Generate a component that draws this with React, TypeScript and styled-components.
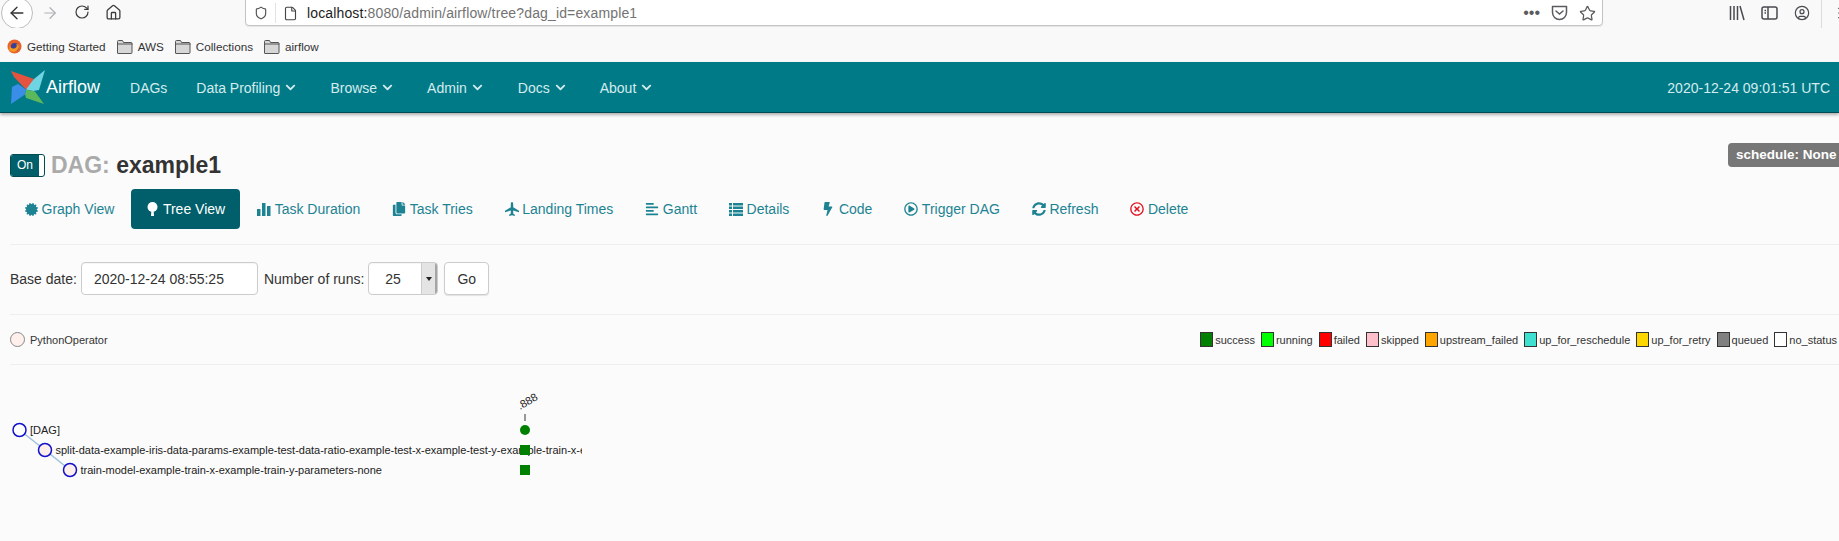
import React from 'react';
import styled, { createGlobalStyle } from 'styled-components';
import { ArrowLeft, ArrowRight, RotateCw, House, Shield, File, Star, CircleUser, Menu } from 'lucide-react';
import {
  FaCertificate,
  FaCopy,
  FaAlignLeft,
  FaBolt,
  FaRegPlayCircle,
  FaSyncAlt,
  FaRegTimesCircle,
  FaChevronDown,
} from 'react-icons/fa';

const GlobalStyle = createGlobalStyle`
  html, body {
    margin: 0;
    height: 541px;
    overflow: hidden;
    background: #fbfbfb;
    font-family: 'Liberation Sans', Arial, sans-serif;
  }
`;

/* ── browser chrome ── */

const Chrome = styled.div`
  background: #f9f9fa;
  color: #4a4a4f;
`;

const Toolbar = styled.div`
  display: flex;
  align-items: flex-start;
  height: 28px;
  overflow: hidden;
`;

const BackButton = styled.div`
  flex: none;
  width: 30px;
  height: 30px;
  margin: -3px 0 0 1px;
  border: 1px solid #bdbdbd;
  border-radius: 50%;
  background: #fff;
  display: flex;
  align-items: center;
  justify-content: center;
`;

const NavIcon = styled.span<{ $left: number; $muted?: boolean }>`
  flex: none;
  display: flex;
  margin: 4px 0 0 ${(p) => p.$left}px;
  color: ${(p) => (p.$muted ? '#b1b1b3' : '#3c3c3f')};
`;

const UrlBar = styled.div`
  flex: none;
  width: 1358px;
  height: 34px;
  margin: -8px 0 0 123px;
  box-sizing: border-box;
  padding: 8px 0 0 8px;
  display: flex;
  align-items: center;
  background: #fff;
  border: 1px solid #c4c4c4;
  border-radius: 4px;
  box-shadow: 0 1px 1px rgba(0, 0, 0, 0.08);
`;

const UrlDivider = styled.span`
  width: 1px;
  height: 20px;
  margin: 0 7px;
  background: #e2e2e2;
`;

const UrlText = styled.span`
  flex: 1;
  margin-left: 9px;
  font-size: 14px;
  color: #737373;
  letter-spacing: 0.01em;
  strong {
    font-weight: 400;
    color: #1c1c1c;
  }
`;

const UrlActions = styled.span`
  display: flex;
  align-items: center;
  gap: 11px;
  margin-right: 6px;
  color: #5b5b5f;
`;

const RightIcons = styled.div`
  display: flex;
  align-items: flex-start;
  margin-left: 126px;
  color: #4a4a4f;
`;

const RightIcon = styled.span<{ $gap: number }>`
  display: flex;
  margin: 5px ${(p) => p.$gap}px 0 0;
`;

const ToolbarDivider = styled.span`
  width: 1px;
  height: 28px;
  margin-right: 14px;
  background: #dcdcdc;
`;

const Bookmarks = styled.div`
  display: flex;
  align-items: center;
  height: 34px;
  padding: 3px 0 0 7px;
  box-sizing: border-box;
  font-size: 11.7px;
  color: #333;
`;

const Bookmark = styled.span`
  display: flex;
  align-items: center;
  gap: 5px;
  margin-right: 11px;
`;

/* ── airflow navbar ── */

const Navbar = styled.nav`
  display: flex;
  align-items: center;
  height: 51px;
  box-sizing: border-box;
  padding: 1px 9px 0 10px;
  background: #017a87;
  border-bottom: 1px solid #024b53;
  box-shadow: 0 2px 3px rgba(0, 0, 0, 0.3);
  color: #d5ecee;
  font-size: 14px;
`;

const Brand = styled.span`
  display: flex;
  align-items: center;
  gap: 1px;
  margin-right: 30px;
  font-size: 18px;
  color: #fff;
`;

const NavItem = styled.span<{ $gap: number }>`
  display: flex;
  align-items: center;
  gap: 5px;
  margin-right: ${(p) => p.$gap}px;
`;

const Clock = styled.span`
  margin-left: auto;
  font-size: 14px;
`;

/* ── page ── */

const Page = styled.main`
  padding: 30px 0 0 10px;
`;

const TitleRow = styled.div`
  display: flex;
  justify-content: space-between;
  align-items: flex-start;
  height: 46px;
`;

const Title = styled.h4`
  display: flex;
  align-items: center;
  gap: 6px;
  margin: 7px 0 0;
  font-size: 23px;
  line-height: 30px;
  font-weight: 700;
  color: #333;
  span {
    color: #aaa;
  }
`;

const Toggle = styled.span`
  display: flex;
  width: 35px;
  height: 23px;
  box-sizing: border-box;
  border: 1px solid #024b53;
  border-radius: 3px;
  background: #fff;
  overflow: hidden;
  font-size: 12px;
  font-weight: 400;
`;

const ToggleOn = styled.span`
  && {
    color: #fff;
  }
  width: 28px;
  background: #005f6b;
  text-align: center;
  line-height: 21px;
`;

const ScheduleBadge = styled.span`
  box-sizing: border-box;
  width: 111px;
  height: 24px;
  padding-left: 8px;
  line-height: 24px;
  border-radius: 4px 0 0 4px;
  background: #777;
  color: #fff;
  font-size: 13.5px;
  font-weight: 700;
  white-space: nowrap;
`;

const Tabs = styled.ul`
  display: flex;
  gap: 2px;
  margin: 0;
  padding: 0 0 15px;
  list-style: none;
  border-bottom: 1px solid #eee;
`;

const Tab = styled.li<{ $active?: boolean }>`
  display: flex;
  align-items: center;
  gap: 3.5px;
  height: 40px;
  padding: 0 15px;
  border-radius: 4px;
  font-size: 14px;
  color: ${(p) => (p.$active ? '#fff' : '#1d8393')};
  background: ${(p) => (p.$active ? '#005f6b' : 'transparent')};
`;

const TabIcon = styled.span<{ $danger?: boolean; $wide?: boolean }>`
  display: flex;
  justify-content: center;
  min-width: ${(p) => (p.$wide ? '11px' : '0')};
  color: ${(p) => (p.$danger ? '#e0101c' : 'inherit')};
`;

const FormRow = styled.form`
  display: flex;
  align-items: center;
  height: 70px;
  padding-bottom: 2px;
  box-sizing: border-box;
  border-bottom: 1px solid #eee;
  font-size: 14px;
  color: #333;
`;

const Field = styled.span`
  display: flex;
  align-items: center;
  height: 33px;
  box-sizing: border-box;
  background: #fff;
  border: 1px solid #ccc;
  border-radius: 4px;
  box-shadow: inset 0 1px 1px rgba(0, 0, 0, 0.04);
`;

const DateField = styled(Field)`
  width: 177px;
  margin: 0 6px 0 4px;
  padding-left: 12px;
`;

const RunsField = styled(Field)`
  width: 70px;
  margin: 0 6px 0 4px;
  padding-left: 16px;
  justify-content: space-between;
  overflow: hidden;
`;

const SelectArrow = styled.span`
  width: 13px;
  height: 100%;
  display: flex;
  align-items: center;
  justify-content: center;
  background: #e4e4e4;
  border-left: 1px solid #ccc;
  border-right: 2px solid #a5a5a5;
  &::after {
    content: '';
    border: 3px solid transparent;
    border-top: 4px solid #222;
    border-bottom: 0;
  }
`;

const GoButton = styled(Field)`
  width: 45px;
  justify-content: center;
  box-shadow: 0 1px 1px rgba(0, 0, 0, 0.1);
`;

const LegendRow = styled.div`
  display: flex;
  justify-content: space-between;
  align-items: center;
  height: 50px;
  padding: 0 2px 0 0;
  box-sizing: border-box;
  border-bottom: 1px solid #eee;
  font-size: 11px;
  color: #333;
`;

const OperatorKey = styled.span`
  display: flex;
  align-items: center;
  gap: 5px;
  &::before {
    content: '';
    width: 13px;
    height: 13px;
    border: 1px solid #888;
    border-radius: 50%;
    background: #fff0eb;
  }
`;

const Legend = styled.div`
  display: flex;
  gap: 6px;
`;

const LegendItem = styled.span`
  display: flex;
  align-items: center;
  gap: 2px;
`;

const Swatch = styled.span<{ $color: string }>`
  width: 11px;
  height: 13px;
  border: 1px solid #333;
  background: ${(p) => p.$color};
`;

const TreeWrap = styled.div`
  margin: 24px 0 0 -10px;
`;

const TreeSvg = styled.svg`
  display: block;
`;

/* ── drawings ── */

const TreeIcon = () => (
  <svg width="13" height="14" viewBox="0 0 13 14" fill="currentColor">
    <ellipse cx="6.500" cy="5" rx="5" ry="5" />
    <path d="M5.400 8h2.200l.4 6H5z" />
  </svg>
);

const StatsIcon = () => (
  <svg width="14" height="14" viewBox="0 0 14 14" fill="currentColor">
    <rect x="0" y="7" width="3.500" height="7" />
    <rect x="5" y="1" width="3.500" height="13" />
    <rect x="10" y="4" width="3.500" height="10" />
  </svg>
);

const PlaneIcon = () => (
  <svg width="14" height="14" viewBox="0 0 14 14" fill="currentColor">
    <path d="M7 0c.9 0 1.200 1.200 1.200 2.500v2.700L14 8.800v1.400L8.200 8.600v3l1.600 1.200V14L7 13.200 4.200 14v-1.200l1.600-1.200v-3L0 10.200V8.800l5.800-3.600V2.500C5.800 1.200 6.100 0 7 0z" />
  </svg>
);

const ListIcon = () => (
  <svg width="14" height="13" viewBox="0 0 14 13" fill="currentColor">
    <rect x="0" y="0" width="3" height="2.500" />
    <rect x="0" y="3.500" width="3" height="2.500" />
    <rect x="0" y="7" width="3" height="2.500" />
    <rect x="0" y="10.500" width="3" height="2.500" />
    <rect x="4" y="0" width="10" height="2.500" />
    <rect x="4" y="3.500" width="10" height="2.500" />
    <rect x="4" y="7" width="10" height="2.500" />
    <rect x="4" y="10.500" width="10" height="2.500" />
  </svg>
);

const Pinwheel = () => (
  <svg width="35" height="35" viewBox="0 0 35 35">
    <path d="M1 1l23 8-3 5-5 5.500L4 7z" fill="#e4533f" />
    <path d="M24 9l-3 5-5 5.500z" fill="#f08a72" />
    <path d="M35 0L29 20l-6 1-7-1.500L24 9z" fill="#6fd5e3" />
    <path d="M34 34L16 28l-1-4 1-4.500 9 2z" fill="#5cb85c" />
    <path d="M1 34L2 17l6-3 8 5.500-1 5z" fill="#3b8ee8" />
  </svg>
);

const Folder = () => (
  <svg width="16" height="14" viewBox="0 0 16 14" fill="#d7d7d7" stroke="#555">
    <path d="M.5 3V1.500a1 1 0 0 1 1-1h4l1 2h8a1 1 0 0 1 .5 1v9a1 1 0 0 1-1 1h-13a.5.5 0 0 1-.5-.5z" />
    <path d="M.5 4h15" fill="none" />
  </svg>
);

const FirefoxLogo = () => (
  <svg width="15" height="15" viewBox="0 0 15 15">
    <circle cx="7.500" cy="7.500" r="7" fill="#e8622a" />
    <circle cx="7.800" cy="8" r="4" fill="#3b3f96" />
    <path d="M2 11C5 14 11 13 12 8c0-2-1-3-3-3 2 2 0 5-3 4.500S3 7 3 5z" fill="#f59a1f" />
  </svg>
);

const Pocket = () => (
  <svg width="17" height="16" viewBox="0 0 17 16" fill="none" stroke="currentColor" strokeWidth="1.500">
    <path d="M1.500 1.500h14v6a7 7 0 0 1-14 0z" strokeLinejoin="round" />
    <path d="M5 6l3.500 3L12 6" strokeLinecap="round" />
  </svg>
);

const LibraryIcon = () => (
  <svg width="16" height="16" viewBox="0 0 16 16" fill="none" stroke="currentColor" strokeWidth="1.500">
    <path d="M1.500 1v14M5 1v14M8.500 1v14M11 1l4 14" />
  </svg>
);

const SidebarIcon = () => (
  <svg width="17" height="16" viewBox="0 0 17 16" fill="none" stroke="currentColor" strokeWidth="1.500">
    <rect x="1" y="2" width="15" height="12" rx="2" />
    <path d="M7 2v12M3.500 5.500H5M3.500 8H5" />
  </svg>
);

const tabs = [
  { label: 'Graph View', icon: <FaCertificate size={13} /> },
  { label: 'Tree View', icon: <TreeIcon />, active: true },
  { label: 'Task Duration', icon: <StatsIcon /> },
  { label: 'Task Tries', icon: <FaCopy size={14} /> },
  { label: 'Landing Times', icon: <PlaneIcon /> },
  { label: 'Gantt', icon: <FaAlignLeft size={14} /> },
  { label: 'Details', icon: <ListIcon /> },
  { label: 'Code', icon: <FaBolt size={14} />, wide: true },
  { label: 'Trigger DAG', icon: <FaRegPlayCircle size={14} /> },
  { label: 'Refresh', icon: <FaSyncAlt size={14} /> },
  { label: 'Delete', icon: <FaRegTimesCircle size={14} />, danger: true },
];

const states = [
  ['success', 'green'],
  ['running', 'lime'],
  ['failed', 'red'],
  ['skipped', 'pink'],
  ['upstream_failed', 'orange'],
  ['up_for_reschedule', 'turquoise'],
  ['up_for_retry', 'gold'],
  ['queued', 'gray'],
  ['no_status', 'white'],
];

const menus = [
  { label: 'Data Profiling', gap: 34 },
  { label: 'Browse', gap: 34 },
  { label: 'Admin', gap: 35 },
  { label: 'Docs', gap: 34 },
  { label: 'About', gap: 0 },
];

const nodes = [
  { x: 19.5, y: 431, fill: '#fff', label: '[DAG]' },
  { x: 45, y: 451, fill: '#ffefeb', label: 'split-data-example-iris-data-params-example-test-data-ratio-example-test-x-example-test-y-example-train-x-example-train-y' },
  { x: 70, y: 471, fill: '#ffefeb', label: 'train-model-example-train-x-example-train-y-parameters-none' },
];

export default function App() {
  return (
    <>
      <GlobalStyle />
      <Chrome>
        <Toolbar>
          <BackButton>
            <ArrowLeft size={20} strokeWidth={1.6} color="#333" />
          </BackButton>
          <NavIcon $left={8} $muted>
            <ArrowRight size={18} strokeWidth={1.6} />
          </NavIcon>
          <NavIcon $left={15}>
            <RotateCw size={16} strokeWidth={1.8} />
          </NavIcon>
          <NavIcon $left={15}>
            <House size={17} strokeWidth={1.8} />
          </NavIcon>
          <UrlBar>
            <Shield size={14} strokeWidth={2} color="#555" />
            <UrlDivider />
            <File size={15} strokeWidth={1.8} color="#444" />
            <UrlText>
              <strong>localhost:</strong>8080/admin/airflow/tree?dag_id=example1
            </UrlText>
            <UrlActions>
              <span>•••</span>
              <Pocket />
              <Star size={17} strokeWidth={1.8} />
            </UrlActions>
          </UrlBar>
          <RightIcons>
            <RightIcon $gap={16}><LibraryIcon /></RightIcon>
            <RightIcon $gap={16}><SidebarIcon /></RightIcon>
            <RightIcon $gap={11}><CircleUser size={16} strokeWidth={1.8} /></RightIcon>
            <ToolbarDivider />
            <RightIcon $gap={0}><Menu size={16} strokeWidth={1.8} /></RightIcon>
          </RightIcons>
        </Toolbar>
        <Bookmarks>
          <Bookmark><FirefoxLogo />Getting Started</Bookmark>
          <Bookmark><Folder />AWS</Bookmark>
          <Bookmark><Folder />Collections</Bookmark>
          <Bookmark><Folder />airflow</Bookmark>
        </Bookmarks>
      </Chrome>

      <Navbar>
        <Brand><Pinwheel />Airflow</Brand>
        <NavItem $gap={29}>DAGs</NavItem>
        {menus.map((m) => (
          <NavItem key={m.label} $gap={m.gap}>
            {m.label} <FaChevronDown size={11} />
          </NavItem>
        ))}
        <Clock>2020-12-24 09:01:51 UTC</Clock>
      </Navbar>

      <Page>
        <TitleRow>
          <Title>
            <Toggle><ToggleOn>On</ToggleOn></Toggle>
            <div><span>DAG:</span> example1</div>
          </Title>
          <ScheduleBadge>schedule: None</ScheduleBadge>
        </TitleRow>

        <Tabs>
          {tabs.map((t) => (
            <Tab key={t.label} $active={t.active}>
              <TabIcon $danger={t.danger} $wide={t.wide}>{t.icon}</TabIcon>
              {t.label}
            </Tab>
          ))}
        </Tabs>

        <FormRow>
          Base date:
          <DateField>2020-12-24 08:55:25</DateField>
          Number of runs:
          <RunsField>25<SelectArrow /></RunsField>
          <GoButton>Go</GoButton>
        </FormRow>

        <LegendRow>
          <OperatorKey>PythonOperator</OperatorKey>
          <Legend>
            {states.map(([name, color]) => (
              <LegendItem key={name}>
                <Swatch $color={color} />
                {name}
              </LegendItem>
            ))}
          </Legend>
        </LegendRow>

        <TreeWrap>
          <TreeSvg width="582" height="96" viewBox="0 390 582 96" fontFamily="'Liberation Sans', Arial, sans-serif" fontSize="11">
            <path d="M19.500 431L45 451M45 451L70 471" stroke="#9fc0dc" strokeWidth="1.500" fill="none" />
            {nodes.map((n) => (
              <g key={n.label}>
                <circle cx={n.x} cy={n.y} r="6.500" fill={n.fill} stroke="#1111cc" strokeWidth="1.500" />
                <text x={n.x + 10.5} y={n.y + 4} fill="#222">{n.label}</text>
              </g>
            ))}
            <path d="M525 415v7" stroke="#333" />
            <text x="520" y="411" fill="#222" transform="rotate(-30 520 411)">.888</text>
            <circle cx="525" cy="431" r="5" fill="green" />
            <rect x="520" y="446" width="10" height="10" fill="green" />
            <rect x="520" y="466" width="10" height="10" fill="green" />
          </TreeSvg>
        </TreeWrap>
      </Page>
    </>
  );
}
